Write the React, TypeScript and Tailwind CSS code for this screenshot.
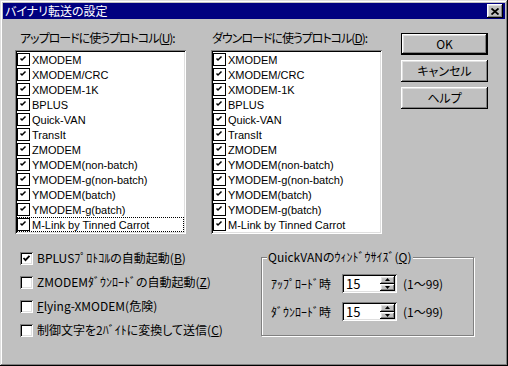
const raised =
  'shadow-[inset_-1px_-1px_0_#000000,inset_1px_1px_0_#ffffff,inset_-2px_-2px_0_#808080,inset_2px_2px_0_#dfdfdf]';
const sunken =
  'shadow-[inset_1px_1px_0_#808080,inset_-1px_-1px_0_#ffffff,inset_2px_2px_0_#000000,inset_-2px_-2px_0_#dfdfdf]';

const protocols = [
  'XMODEM',
  'XMODEM/CRC',
  'XMODEM-1K',
  'BPLUS',
  'Quick-VAN',
  'TransIt',
  'ZMODEM',
  'YMODEM(non-batch)',
  'YMODEM-g(non-batch)',
  'YMODEM(batch)',
  'YMODEM-g(batch)',
  'M-Link by Tinned Carrot',
];

function SmallCheck() {
  return (
    <svg width="13" height="13" viewBox="0 0 13 13" className="shrink-0">
      <rect x="0.5" y="0.5" width="12" height="12" fill="#ffffff" stroke="#000000" />
      <polyline points="3.5,5.5 5,7 8.5,3.5" fill="none" stroke="#000000" strokeWidth="1.5" />
    </svg>
  );
}

function ListBox({ focused }: { focused?: boolean }) {
  return (
    <div className={`w-[171px] h-[184px] bg-white p-[2px] overflow-hidden ${sunken}`}>
      {protocols.map((p, i) => (
        <div
          key={p}
          className={`h-[15px] flex items-center ${
            focused && i === protocols.length - 1
              ? 'outline-1 outline-dotted outline-black -outline-offset-1'
              : ''
          }`}
        >
          <SmallCheck />
          <span className="ml-[2px] whitespace-nowrap font-['Liberation_Sans',sans-serif] text-[11px] leading-[12px]">
            {p}
          </span>
        </div>
      ))}
    </div>
  );
}

function Button({ children, isDefault }: { children: React.ReactNode; isDefault?: boolean }) {
  return (
    <div className={`w-[87px] h-[22px] ${isDefault ? 'border border-black' : ''}`}>
      <div className={`w-full h-full flex items-center justify-center ${raised}`}>{children}</div>
    </div>
  );
}

function CheckRow({ checked, children }: { checked?: boolean; children: React.ReactNode }) {
  return (
    <div className="h-[24px] flex items-center">
      <div className={`w-[13px] h-[13px] bg-white shrink-0 ${sunken} flex items-center justify-center`}>
        {checked && (
          <svg width="9" height="9" viewBox="0 0 9 9">
            <polyline points="1.5,4 3.5,6.2 7.5,1.8" fill="none" stroke="#000000" strokeWidth="1.8" />
          </svg>
        )}
      </div>
      <span className="ml-[4px] whitespace-nowrap">{children}</span>
    </div>
  );
}

function SpinEdit() {
  return (
    <div className={`w-[55px] h-[19px] bg-white p-[2px] flex shrink-0 ${sunken}`}>
      <span className="flex-1 pl-[2px] flex items-center text-[13px]">15</span>
      <div className="w-[15px] flex flex-col">
        <div className={`flex-1 bg-[#c0c0c0] flex items-center justify-center ${raised}`}>
          <svg width="5" height="3" viewBox="0 0 5 3">
            <polygon points="2.5,0 5,3 0,3" fill="#000000" />
          </svg>
        </div>
        <div className={`flex-1 bg-[#c0c0c0] flex items-center justify-center ${raised}`}>
          <svg width="5" height="3" viewBox="0 0 5 3">
            <polygon points="0,0 5,0 2.5,3" fill="#000000" />
          </svg>
        </div>
      </div>
    </div>
  );
}

export default function App() {
  return (
    <div
      className={`w-[508px] h-[366px] bg-[#c0c0c0] p-[3px] flex flex-col text-black text-[12px] leading-[12px] font-['Noto_Sans_CJK_JP','Noto_Sans',sans-serif] [font-feature-settings:'palt'] shadow-[inset_-1px_-1px_0_#000000,inset_1px_1px_0_#dfdfdf,inset_-2px_-2px_0_#808080,inset_2px_2px_0_#ffffff]`}
    >
      {/* Title bar */}
      <div className="h-[16px] bg-[#000080] flex items-center justify-between pl-[2px] pr-[2px]">
        <span className="text-white">バイナリ転送の設定</span>
        <div className={`w-[16px] h-[14px] bg-[#c0c0c0] flex items-center justify-center ${raised}`}>
          <svg width="8" height="7" viewBox="0 0 8 7">
            <path d="M0.5 0.5 L7.5 6.5 M7.5 0.5 L0.5 6.5" stroke="#000000" strokeWidth="1.8" />
          </svg>
        </div>
      </div>

      {/* Protocol lists and buttons */}
      <div className="flex pl-[12px] pt-[13px]">
        <div className="flex flex-col w-[171px] shrink-0">
          <span className="ml-[5px] whitespace-nowrap tracking-[-1px]">
            アップロードに使うプロトコル(<u>U</u>):
          </span>
          <div className="mt-[6px]">
            <ListBox focused />
          </div>
        </div>
        <div className="flex flex-col w-[171px] shrink-0 ml-[25px]">
          <span className="ml-[1px] whitespace-nowrap tracking-[-1px]">
            ダウンロードに使うプロトコル(<u>D</u>):
          </span>
          <div className="mt-[6px]">
            <ListBox />
          </div>
        </div>
        <div className="flex flex-col gap-[5px] ml-[19px] mt-[1px]">
          <Button isDefault>OK</Button>
          <Button>キャンセル</Button>
          <Button>ヘルプ</Button>
        </div>
      </div>

      {/* Options */}
      <div className="flex mt-[12px]">
        <div className="w-[258px] shrink-0 pl-[17px] flex flex-col">
          <CheckRow checked>
            BPLUSﾌﾟﾛﾄｺﾙの自動起動(<u>B</u>)
          </CheckRow>
          <CheckRow>
            ZMODEMﾀﾞｳﾝﾛｰﾄﾞの自動起動(<u>Z</u>)
          </CheckRow>
          <CheckRow>
            <u>F</u>lying-XMODEM(危険)
          </CheckRow>
          <CheckRow>
            制御文字を2ﾊﾞｲﾄに変換して送信(<u>C</u>)
          </CheckRow>
        </div>
        <div className="relative mt-[11px] w-[213px] h-[79px] shrink-0 border border-[#808080] shadow-[inset_1px_1px_0_#ffffff,1px_1px_0_#ffffff]">
          <span className="absolute -top-[7px] left-[5px] px-[1px] bg-[#c0c0c0] whitespace-nowrap">
            QuickVANのｳｨﾝﾄﾞｳｻｲｽﾞ(<u>Q</u>)
          </span>
          <div className="flex flex-col pt-[16px] pl-[9px] gap-[9px]">
            <div className="h-[19px] flex items-center">
              <span className="w-[71px] shrink-0 whitespace-nowrap">ｱｯﾌﾟﾛｰﾄﾞ時</span>
              <SpinEdit />
              <span className="ml-[6px] whitespace-nowrap">(1～99)</span>
            </div>
            <div className="h-[19px] flex items-center">
              <span className="w-[71px] shrink-0 whitespace-nowrap">ﾀﾞｳﾝﾛｰﾄﾞ時</span>
              <SpinEdit />
              <span className="ml-[6px] whitespace-nowrap">(1～99)</span>
            </div>
          </div>
        </div>
      </div>
    </div>
  );
}
